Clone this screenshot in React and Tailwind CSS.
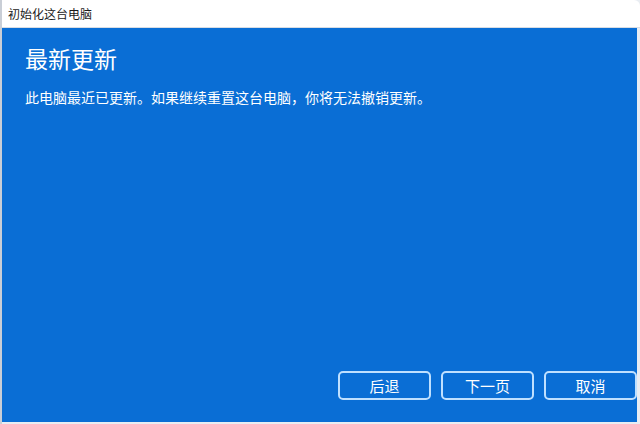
export default function App() {
  const font = { fontFamily: '"Noto Sans CJK SC", "Microsoft YaHei", sans-serif' };
  return (
    <div className="w-[640px] h-[424px] bg-[#e9edf2] overflow-hidden" style={font}>
      <div className="h-full flex flex-col border-l-2 border-[#c9ced6] rounded-tr-[6px] overflow-hidden">
        {/* title bar */}
        <div className="h-[28px] shrink-0 bg-white flex items-center pl-[6px] text-[12px] text-[#1a1a1a] border-b border-[#d8dde4]">
          初始化这台电脑
        </div>
        {/* content */}
        <div className="flex-1 bg-[#0a6ed5] flex flex-col mb-[2px] mr-[3px]">
          <div className="pl-[23px] pt-[14px]">
            <h1 className="text-[23px] leading-[32px] text-white">最新更新</h1>
            <p className="mt-[13px] text-[14px] leading-[20px] text-white">
              此电脑最近已更新。如果继续重置这台电脑，你将无法撤销更新。
            </p>
          </div>
          <div className="mt-auto mb-[22px] flex justify-end gap-[10px]">
            {['后退', '下一页', '取消'].map((t) => (
              <button
                key={t}
                className="w-[93px] h-[29px] rounded-[5px] border-2 border-[#bfe0ff] text-[15px] leading-none text-white bg-transparent"
              >
                {t}
              </button>
            ))}
          </div>
        </div>
      </div>
    </div>
  );
}
